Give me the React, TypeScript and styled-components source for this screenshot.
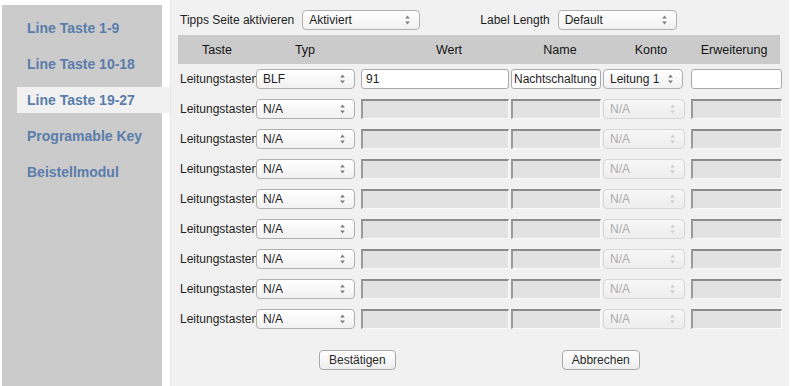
import styled, { createGlobalStyle } from 'styled-components';

const GlobalStyle = createGlobalStyle`
  html, body {
    margin: 0;
    padding: 0;
    background: #fff;
  }
  body {
    font-family: "Liberation Sans", Arial, sans-serif;
    font-size: 12px;
    color: #1e1e1e;
  }
`;

const navItems = [
  'Line Taste 1-9',
  'Line Taste 10-18',
  'Line Taste 19-27',
  'Programable Key',
  'Beistellmodul',
];

const headCells = [
  { label: 'Taste', w: 78 },
  { label: 'Typ', w: 98 },
  { label: 'Wert', w: 190 },
  { label: 'Name', w: 32 },
  { label: 'Konto', w: 150 },
  { label: 'Erweiterung', w: 16 },
];

function Arrows({ disabled }: { disabled?: boolean }) {
  const c = disabled ? '#cccccc' : '#7a7a7a';
  return (
    <ArrowIcon width="7" height="12" viewBox="0 0 7 12">
      <path d="M3.5 1.5 L5.8 4.5 L1.2 4.5 Z" fill={c} />
      <path d="M1.2 7.5 L5.8 7.5 L3.5 10.5 Z" fill={c} />
    </ArrowIcon>
  );
}

function Select({
  value,
  width,
  disabled,
}: {
  value: string;
  width: number;
  disabled?: boolean;
}) {
  return (
    <SelectBox $w={width} $disabled={disabled}>
      <span>{value}</span>
      <Arrows disabled={disabled} />
    </SelectBox>
  );
}

export default function App() {
  const rows = Array.from({ length: 9 }, (_, i) => i);

  return (
    <>
      <GlobalStyle />
      <Page>
        <Sidebar>
          {navItems.map((item, i) => (
            <NavItem key={item} $active={i === 2}>
              {item}
            </NavItem>
          ))}
        </Sidebar>
        <Panel>
          <TopBar>
            <Field $gap={8}>
              <span>Tipps Seite aktivieren</span>
              <Select value="Aktiviert" width={118} />
            </Field>
            <Field $gap={8}>
              <span>Label Length</span>
              <Select value="Default" width={119} />
            </Field>
          </TopBar>

          <HeadRow>
            {headCells.map((h) => (
              <HeadCell key={h.label} $w={h.w}>
                <span>{h.label}</span>
              </HeadCell>
            ))}
          </HeadRow>

          {rows.map((i) => {
            const first = i === 0;
            return (
              <Row key={i}>
                <LineLabel>Leitungstasten</LineLabel>
                <Select value={first ? 'BLF' : 'N/A'} width={99} />
                <TextInput $w={148} $disabled={!first}>
                  {first ? '91' : ''}
                </TextInput>
                <TextInput $w={90} $disabled={!first}>
                  {first ? 'Nachtschaltung' : ''}
                </TextInput>
                <Select
                  value={first ? 'Leitung 1' : 'N/A'}
                  width={first ? 80 : 82}
                  disabled={!first}
                />
                <TextInput $w={91} $disabled={!first} />
              </Row>
            );
          })}

          <Buttons>
            <Button>Bestätigen</Button>
            <Button>Abbrechen</Button>
          </Buttons>
        </Panel>
      </Page>
    </>
  );
}

const Page = styled.div`
  display: flex;
  height: 386px;
  overflow: hidden;
`;

const Sidebar = styled.div`
  width: 160px;
  margin: 5px 0 0 2px;
  padding-top: 10px;
  background: #cbcbcb;
  display: flex;
  flex-direction: column;
  gap: 10px;
`;

const NavItem = styled.div<{ $active?: boolean }>`
  height: 26px;
  line-height: 26px;
  margin-left: 15px;
  margin-right: -8px;
  padding-left: 10px;
  font-size: 14px;
  font-weight: 700;
  color: #5a7dab;
  white-space: nowrap;
  background: ${(p) => (p.$active ? '#f1f1f1' : 'transparent')};
`;

const Panel = styled.div`
  width: 611px;
  margin-left: 8px;
  padding: 10px 0 0 7px;
  background: #f1f1f1;
  border-left: 1px solid #e6e6e6;
`;

const TopBar = styled.div`
  display: flex;
  align-items: center;
  height: 20px;
  padding-left: 2px;
  gap: 60px;
`;

const Field = styled.div<{ $gap?: number }>`
  display: flex;
  align-items: center;
  gap: ${(p) => p.$gap ?? 6}px;
`;

const SelectBox = styled.div<{ $w: number; $disabled?: boolean }>`
  box-sizing: border-box;
  width: ${(p) => p.$w}px;
  height: 20px;
  padding: 0 6px 0 6px;
  display: flex;
  align-items: center;
  justify-content: space-between;
  border: 1px solid ${(p) => (p.$disabled ? '#d6d6d6' : '#b0b0b0')};
  border-radius: 4px;
  background: ${(p) =>
    p.$disabled
      ? 'linear-gradient(#f7f7f7, #eeeeee)'
      : 'linear-gradient(#ffffff, #f1f1f1)'};
  color: ${(p) => (p.$disabled ? '#acacac' : '#1e1e1e')};
  white-space: nowrap;
`;

const ArrowIcon = styled.svg`
  flex: none;
  margin-right: 2px;
`;

const HeadRow = styled.div`
  display: flex;
  width: 602px;
  height: 29px;
  margin-top: 5px;
  background: #cbcbcb;
  align-items: center;
`;

const HeadCell = styled.div<{ $w: number }>`
  flex: none;
  width: ${(p) => p.$w}px;
  display: flex;
  justify-content: center;
  white-space: nowrap;
  font-size: 12.5px;
  color: #151515;
`;

const Row = styled.div`
  display: grid;
  grid-template-columns: 78px 105px 150px 92px 88px 91px;
  align-items: center;
  height: 30px;
  &:first-of-type {
    margin-top: 1px;
  }
`;

const LineLabel = styled.div`
  padding-left: 2px;
  white-space: nowrap;
  overflow: visible;
  width: 78px;
`;

const TextInput = styled.div<{ $w: number; $disabled?: boolean }>`
  box-sizing: border-box;
  width: ${(p) => p.$w}px;
  height: 20px;
  line-height: 18px;
  padding-left: 5px;
  white-space: nowrap;
  overflow: hidden;
  ${(p) =>
    p.$disabled
      ? `
    background: #e2e2e2;
    border-top: 2px solid #8b8b8b;
    border-left: 2px solid #9b9b9b;
    border-right: 1px solid #fafafa;
    border-bottom: 1px solid #fafafa;
  `
      : `
    background: #fff;
    border: 1px solid #a9a9a9;
    border-radius: 3px;
    padding-left: 4px;
  `}
  &:nth-child(4) {
    padding-left: 2px;
  }
`;

const Buttons = styled.div`
  display: flex;
  margin-top: 16px;
  padding-left: 141px;
  gap: 166px;
`;

const Button = styled.button`
  box-sizing: border-box;
  height: 20px;
  padding: 0 9px;
  border: 1px solid #a8a8a8;
  border-radius: 4px;
  background: linear-gradient(#ffffff, #eeeeee);
  font-family: "Liberation Sans", Arial, sans-serif;
  font-size: 12px;
  color: #2a2a2a;
  cursor: pointer;
`;
